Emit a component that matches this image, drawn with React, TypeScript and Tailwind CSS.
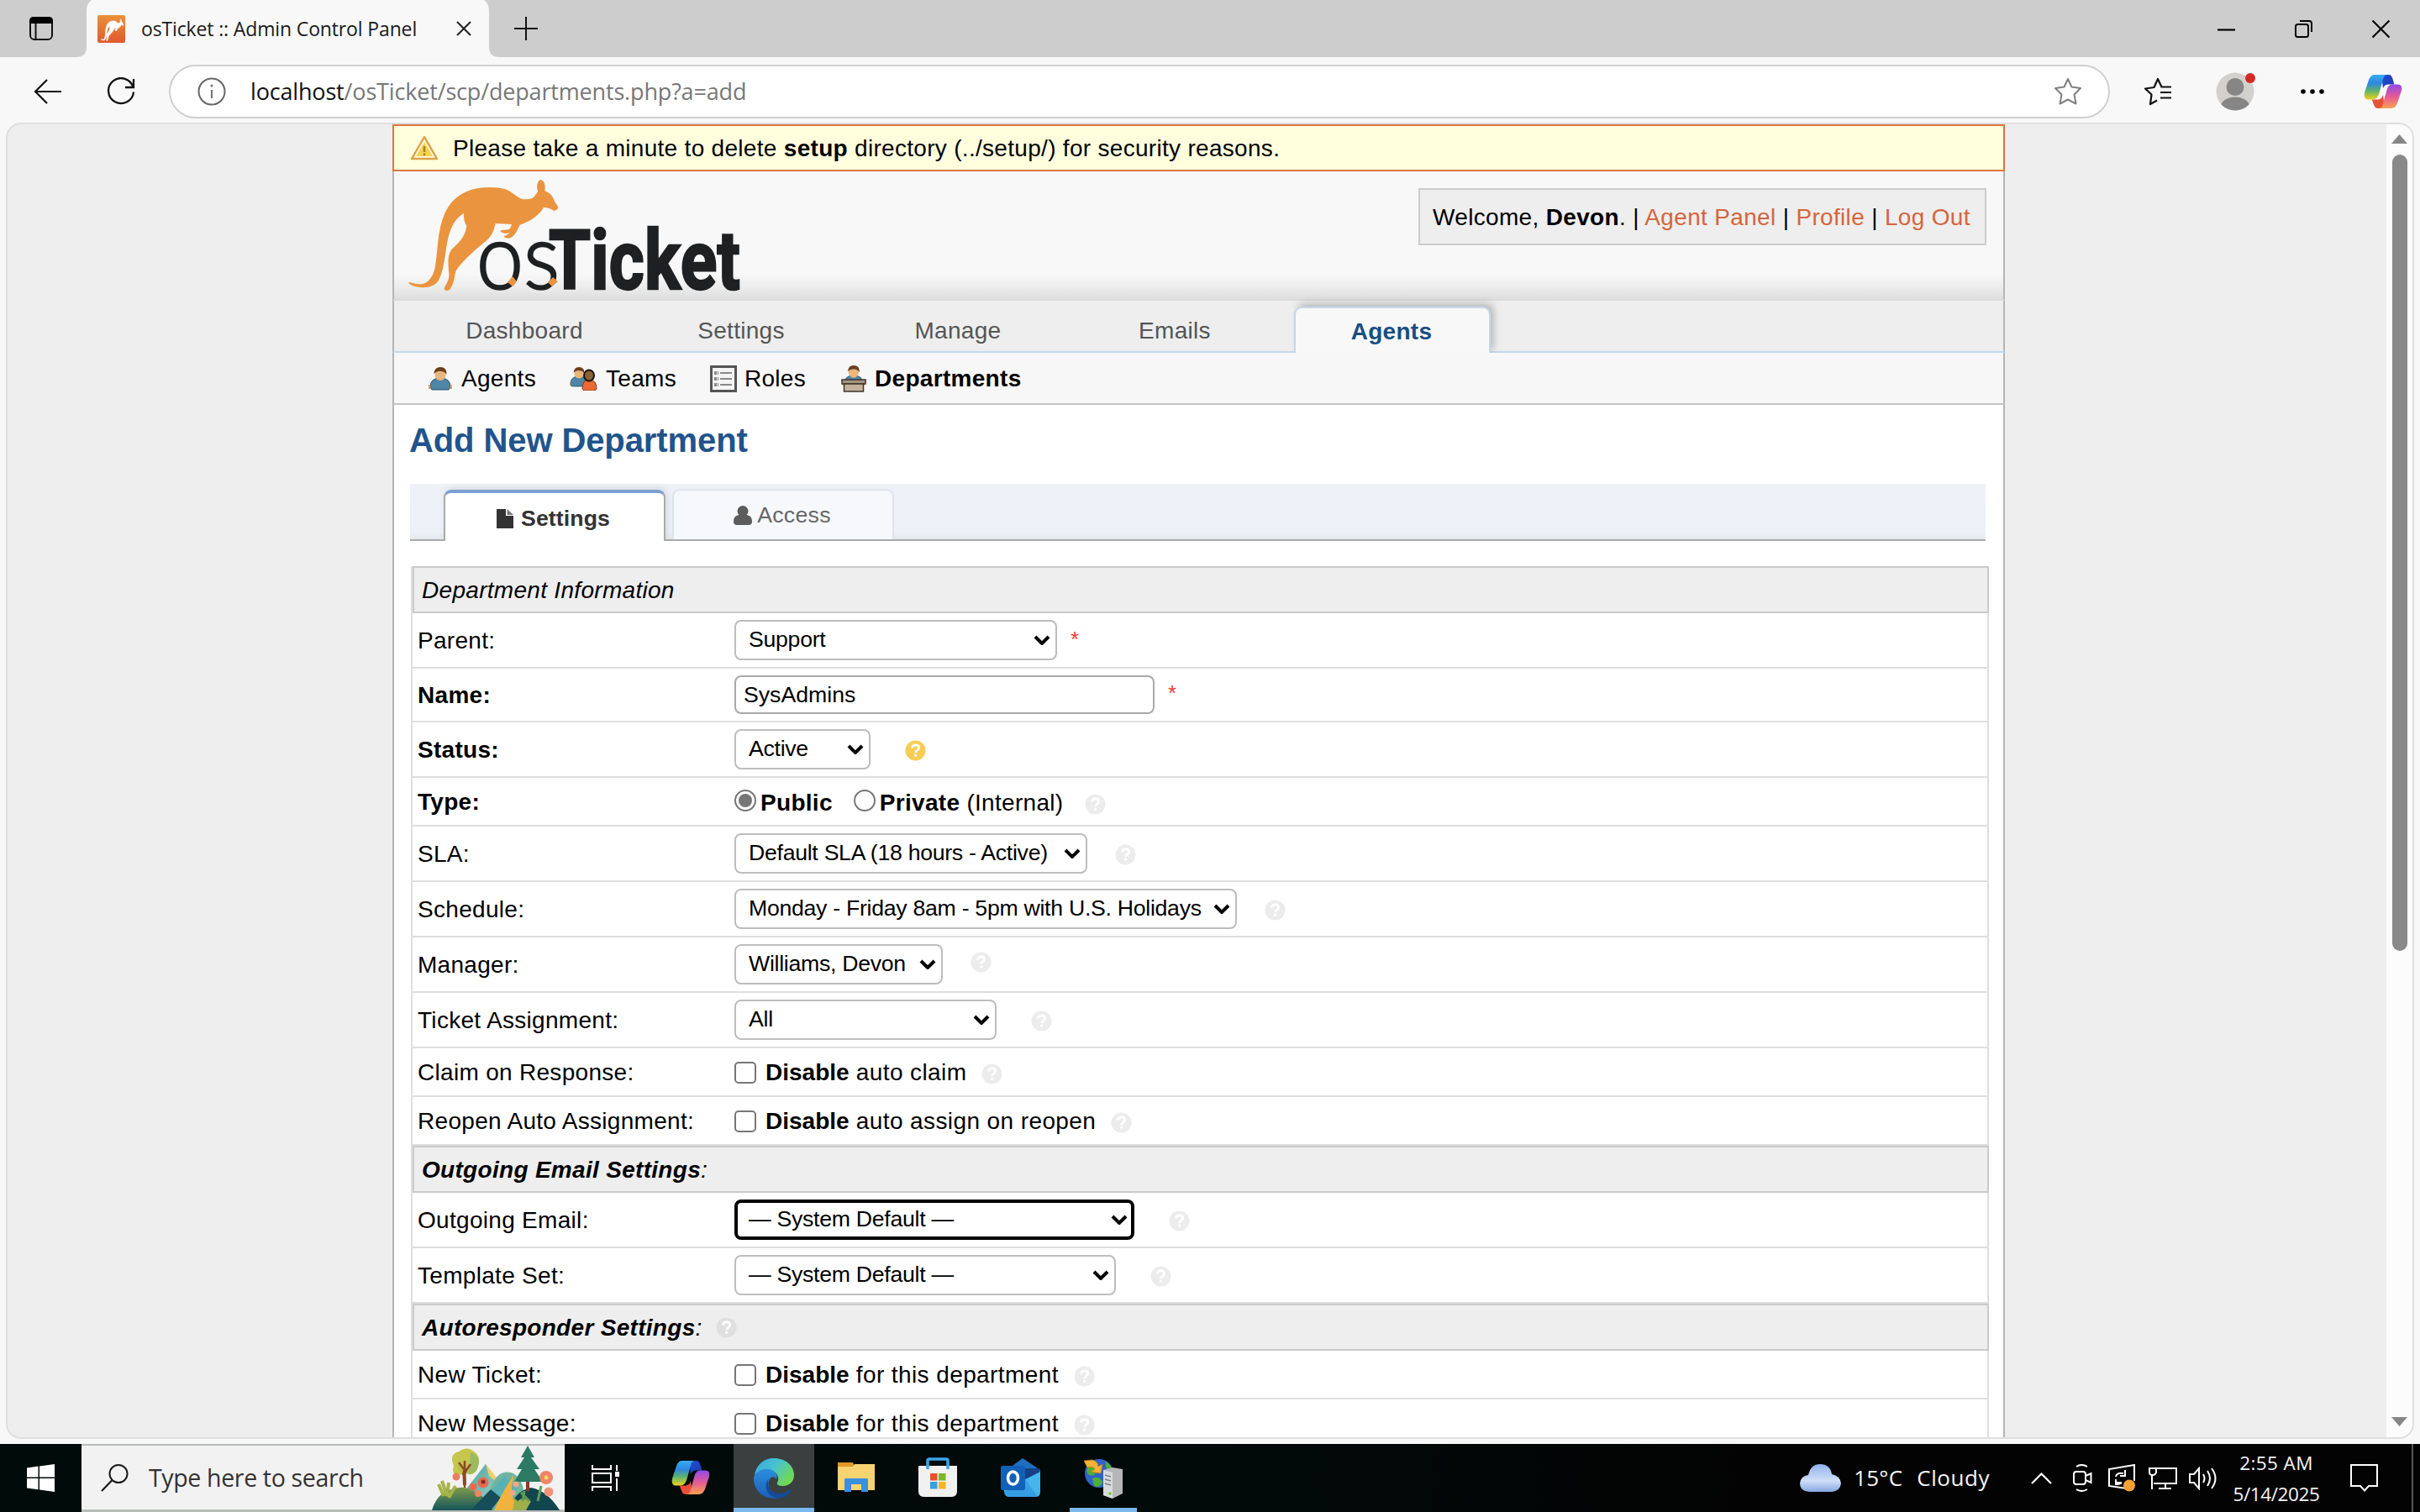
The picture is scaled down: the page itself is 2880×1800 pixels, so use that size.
import React from "react";

const ROO =
  "M421 318C424 326 418 333 412 334C404 328 396 321 386 322C380 338 364 366 328 384C322 400 318 418 306 430C298 434 288 430 289 425C294 421 300 418 303 411C297 416 284 416 279 407C282 400 294 404 302 399C306 392 307 386 308 382L268 379C264 400 262 425 236 452C214 478 184 520 172 545C167 560 168 590 157 612C154 620 146 621 142 614C142 602 154 590 154 560C151 520 150 492 160 472C174 452 194 430 197 388C191 375 190 360 190 343C168 362 156 395 149 450C143 500 141 550 127 585C116 607 95 609 83 607C70 606 56 598 54 590C62 588 70 597 85 596C102 594 113 572 119 540C127 480 124 400 146 335C160 295 186 262 225 253C250 248 275 250 291 256C310 266 322 288 334 292C342 294 350 292 357 290C364 284 368 274 372 264C368 250 369 232 378 222C388 226 391 238 389 263C404 272 410 285 412 298Z";

function T({ className = "", children }: { className?: string; children: React.ReactNode }) {
  return <span className={"whitespace-pre " + className}>{children}</span>;
}

function CopilotIcon({ id, className }: { id: string; className: string }) {
  return (
    <svg viewBox="0 0 48 44" className={className}>
      <defs>
        <linearGradient id={id + "a"} x1="0" y1="0" x2="0" y2="1">
          <stop offset="0" stopColor="#35aef0" />
          <stop offset=".35" stopColor="#2f86e0" />
          <stop offset=".65" stopColor="#5fb46b" />
          <stop offset="1" stopColor="#f1d21c" />
        </linearGradient>
        <linearGradient id={id + "b"} x1="0" y1="0" x2="0" y2="1">
          <stop offset="0" stopColor="#8f4be8" />
          <stop offset=".5" stopColor="#e45a98" />
          <stop offset="1" stopColor="#fba04c" />
        </linearGradient>
        <linearGradient id={id + "c"} x1="0" y1="0" x2="1" y2="1">
          <stop offset="0" stopColor="#1d50d8" />
          <stop offset="1" stopColor="#2637a8" />
        </linearGradient>
      </defs>
      <path d="M22 1H31C34 1 35 3 36 6L38 13H31C27 13 25 15 24 18Z" fill={`url(#${id}c)`} />
      <path d="M26 43H18C14 43 13 40 12 37L10 32H17C21 32 23 30 24 26Z" fill="#e8503a" />
      <path d="M14 1H29C26 1 25 3 24 7L19 25C17 30 15 32 11 32H6C1 32 0 28 1 23L6 8C8 3 10 1 14 1Z" fill={`url(#${id}a)`} />
      <path d="M34 43H19C22 43 23 41 24 37L29 19C31 14 33 13 37 13H42C47 13 48 16 47 21L42 36C40 41 38 43 34 43Z" fill={`url(#${id}b)`} />
    </svg>
  );
}

function TabStrip() {
  return (
    <div className="flex h-[68px] shrink-0 bg-[#cdcdcd]">
      <div className="flex w-[103px] items-center pl-[34px]">
        <svg viewBox="0 0 30 30" className="h-[30px] w-[30px]">
          <rect x="2" y="2" width="26" height="26" rx="5" fill="none" stroke="#111" strokeWidth="2" />
          <path d="M1 9V6Q1 1 6 1H24Q29 1 29 6V9Z" fill="#000" />
          <path d="M8.500 9V28" stroke="#111" strokeWidth="2" />
        </svg>
      </div>
      <div className="relative flex h-[68px] w-[479px] items-center bg-[#f8f8f8] pl-[13px]">
        <svg viewBox="0 0 12 12" className="absolute bottom-0 -left-[12px] h-[12px] w-[12px]">
          <path d="M12 0V12H0Q12 12 12 0" fill="#f8f8f8" />
        </svg>
        <svg viewBox="0 0 12 12" className="absolute bottom-0 -right-[12px] h-[12px] w-[12px]">
          <path d="M0 0V12H12Q0 12 0 0" fill="#f8f8f8" />
        </svg>
        <svg viewBox="0 0 8 12" className="absolute top-0 left-0 h-[12px] w-[8px]">
          <path d="M0 0H6Q0 4 0 12Z" fill="#cdcdcd" />
        </svg>
        <svg viewBox="0 0 8 12" className="absolute top-0 right-0 h-[12px] w-[8px]">
          <path d="M8 0H2Q8 4 8 12Z" fill="#cdcdcd" />
        </svg>
        <svg viewBox="0 0 33 33" className="h-[33px] w-[33px]">
          <defs>
            <linearGradient id="fav" x1="0" y1="0" x2="0" y2="1">
              <stop offset="0" stopColor="#e8923c" />
              <stop offset="1" stopColor="#e2592d" />
            </linearGradient>
          </defs>
          <rect width="33" height="33" rx="2" fill="url(#fav)" />
          <g transform="translate(0.500 -9) scale(.072 .064)">
            <path d={ROO} fill="#fff" stroke="#fff" strokeWidth="10" />
          </g>
        </svg>
        <T className="ml-[19px] font-['Open_Sans'] text-[23px] tracking-[-0.14px] text-[#1a1a1a]">osTicket :: Admin Control Panel</T>
        <svg viewBox="0 0 18 18" className="absolute left-[440px] h-[18px] w-[18px]">
          <path d="M1 1L17 17M17 1L1 17" stroke="#222" strokeWidth="2" />
        </svg>
      </div>
      <div className="flex flex-1 items-center">
        <svg viewBox="0 0 28 28" className="ml-[30px] h-[28px] w-[28px]">
          <path d="M14 0V28M0 14H28" stroke="#111" strokeWidth="2" />
        </svg>
        <div className="mr-[36px] ml-auto flex items-center gap-[71px]">
          <svg viewBox="0 0 21 21" className="h-[21px] w-[21px]">
            <path d="M0 11.500H21" stroke="#000" strokeWidth="2.200" />
          </svg>
          <svg viewBox="0 0 21 21" className="h-[21px] w-[21px]">
            <rect x="1" y="5" width="15" height="15" rx="2.500" fill="none" stroke="#000" strokeWidth="2" />
            <path d="M6 1H17Q20 1 20 4V14" fill="none" stroke="#000" strokeWidth="2" />
          </svg>
          <svg viewBox="0 0 21 21" className="h-[21px] w-[21px]">
            <path d="M.5 .5L20.500 20.500M20.500 .5L.5 20.500" stroke="#000" strokeWidth="2.200" />
          </svg>
        </div>
      </div>
    </div>
  );
}

function Toolbar() {
  return (
    <div className="flex h-[78px] shrink-0 items-center bg-[#f8f8f8] pt-[3px]">
      <svg viewBox="0 0 34 30" className="ml-[40px] h-[30px] w-[34px]">
        <path d="M33 15H2M16 1L2 15L16 29" fill="none" stroke="#111" strokeWidth="2.200" />
      </svg>
      <svg viewBox="0 0 34 34" className="ml-[53px] h-[34px] w-[34px]">
        <path d="M31.500 12A15 15 0 1 0 32 17.500" fill="none" stroke="#111" strokeWidth="2.300" />
        <path d="M32 2V12H22" fill="none" stroke="#111" strokeWidth="2.300" />
      </svg>
      <div className="ml-[40px] flex h-[64px] w-[2310px] items-center rounded-full border-2 border-[#cfcfcf] bg-white">
        <svg viewBox="0 0 34 34" className="ml-[32px] h-[34px] w-[34px]">
          <circle cx="17" cy="17" r="15.500" fill="none" stroke="#666" strokeWidth="2" />
          <path d="M17 15V25" stroke="#777" strokeWidth="2.200" />
          <circle cx="17" cy="10" r="1.600" fill="#777" />
        </svg>
        <span className="ml-[29px] pt-px font-['Open_Sans'] text-[27px] tracking-[-0.17px] text-[#777]">
          <T className="text-[#111]">localhost</T>
          <T>/osTicket/scp/departments.php?a=add</T>
        </span>
        <svg viewBox="0 0 34 34" className="mr-[31px] ml-auto h-[34px] w-[34px]">
          <path d="M17 2L21.500 11.500L32 13L24.500 20.500L26.500 31.500L17 26.500L7.500 31.500L9.500 20.500L2 13L12.500 11.500Z" fill="none" stroke="#808080" strokeWidth="2" strokeLinejoin="round" />
        </svg>
      </div>
      <svg viewBox="0 0 34 34" className="ml-[40px] h-[34px] w-[34px]">
        <path d="M16 27.500L8 32L9.500 20.500L2 13.500L12.500 12L17 2L21.500 11.500H33M20 18H33M20 24.500H33" fill="none" stroke="#111" strokeWidth="2.200" strokeLinejoin="round" />
      </svg>
      <div className="relative ml-[52px] h-[46px] w-[46px]">
        <svg viewBox="0 0 46 46" className="h-[46px] w-[46px]">
          <defs>
            <clipPath id="av">
              <circle cx="23" cy="23" r="22.500" />
            </clipPath>
          </defs>
          <g clipPath="url(#av)">
            <rect width="46" height="46" fill="#d3d1cd" />
            <circle cx="23" cy="17.500" r="10.500" fill="#868686" />
            <ellipse cx="23" cy="41" rx="17" ry="11.500" fill="#868686" />
          </g>
        </svg>
        <span className="absolute top-[1px] right-[-1px] h-[12px] w-[12px] rounded-full bg-[#d12a22]" />
      </div>
      <svg viewBox="0 0 28 6" className="ml-[55px] h-[6px] w-[28px]">
        <circle cx="3" cy="3" r="2.800" />
        <circle cx="14" cy="3" r="2.800" />
        <circle cx="25" cy="3" r="2.800" />
      </svg>
      <CopilotIcon id="cpa" className="ml-[47px] h-[42px] w-[46px]" />
    </div>
  );
}

function Help({ className = "", color = "text-[#ececec]" }: { className?: string; color?: string }) {
  return (
    <svg viewBox="0 0 25 25" className={`h-[25px] w-[25px] shrink-0 ${color} ${className}`}>
      <circle cx="12.500" cy="12.500" r="12" fill="currentColor" />
      <path d="M8.500 9.500C8.700 7 10.400 5.800 12.600 5.800C15 5.800 16.700 7.200 16.700 9.300C16.700 12.200 12.700 12.200 12.700 15" fill="none" stroke="#fff" strokeWidth="2.800" />
      <rect x="11.200" y="16.700" width="3" height="3" fill="#fff" />
    </svg>
  );
}

function Select({ w, focus, children }: { w: string; focus?: boolean; children: React.ReactNode }) {
  return (
    <div className={`flex h-[48px] shrink-0 items-center rounded-[8px] bg-white text-[26.67px] tracking-[-0.28px] ${w} ${focus ? "border-4 border-black pr-[4px] pl-[13px]" : "border-2 border-[#bdbdbd] pr-[6px] pl-[15px]"}`}>
      <T className="relative -top-px">{children}</T>
      <svg viewBox="0 0 20 12" className="ml-auto h-[12px] w-[20px] shrink-0">
        <path d="M2 2L10 10L18 2" fill="none" stroke="#000" strokeWidth="4" />
      </svg>
    </div>
  );
}

function Row({ label, bold, h = "h-[66px]", children }: { label: string; bold?: boolean; h?: string; children: React.ReactNode }) {
  return (
    <div className={`flex shrink-0 items-center border-x-2 border-b-2 border-[#dedede] ${h}`}>
      <div className={`w-[383px] shrink-0 pt-[2px] pl-[6px] ${bold ? "font-bold" : ""}`}>
        <T>{label}</T>
      </div>
      {children}
    </div>
  );
}

function SectionHead({ children }: { children: React.ReactNode }) {
  return (
    <div className="h-[56px] shrink-0 border-l-2 border-[#dedede]">
      <div className="flex h-[56px] items-center border-2 border-[#cacaca] bg-[#eee] pt-px pl-[9px] italic">{children}</div>
    </div>
  );
}

function Check({ text, label }: { text: string; label: string }) {
  return (
    <Row label={label} h="h-[58px]">
      <span className="mt-px h-[26px] w-[26px] rounded-[5px] border-2 border-[#767676] bg-white" />
      <span className="ml-[11px] pt-[2px]">
        <T className="font-bold tracking-normal">Disable</T>
        <T className="tracking-[0.4px]">{" " + text}</T>
      </span>
      <Help className="mt-[4px] ml-[18px]" />
    </Row>
  );
}

function Logo() {
  return (
    <svg viewBox="0 0 400 140" className="mt-[9px] ml-[17px] h-[140px] w-[400px] overflow-visible">
      <text x="83" y="130.500" fontFamily="Lato" fontWeight="300" fontSize="108" fill="#1e2022" stroke="#1e2022" strokeWidth="2.500" textLength="99" lengthAdjust="spacingAndGlyphs">os</text>
      <path d="M126 116L131 122L126 128L120 123ZM174 117L180 122L173 128L168 123Z" fill="#e9943f" />
      <text x="169" y="130.500" fontFamily="Roboto" fontWeight="700" fontSize="98" fill="#1e2022" stroke="#1e2022" strokeWidth="2.500" textLength="228" lengthAdjust="spacingAndGlyphs">Ticket</text>
      <g transform="translate(-24.200 -73.300) scale(.4847 .3333)">
        <path d={ROO} fill="#ea943f" />
      </g>
    </svg>
  );
}

function Person({ x = 0, shirt = "#4f86a5", hair = "#6b3e1c" }: { x?: number; shirt?: string; hair?: string }) {
  return (
    <g transform={`translate(${x} 0)`}>
      <path d="M2 24Q2 13 14 13Q26 13 26 24L24 27H4Z" fill={shirt} stroke="#2a516b" strokeWidth="1" />
      <path d="M1 21V26M27 21V26" stroke="#e0a066" strokeWidth="2.500" />
      <ellipse cx="14" cy="9" rx="6.500" ry="7" fill="#e9b67c" />
      <path d="M6.500 8Q7 0 14 0Q22 0 21.500 9Q19 5 15 5Q10 4 6.500 8Z" fill={hair} />
    </g>
  );
}

function Header() {
  return (
    <>
      <div className="flex h-[56px] shrink-0 items-center border-2 border-[#df7440] bg-[#ffffdd] pl-[19px]">
        <svg viewBox="0 0 34 30" className="h-[30px] w-[34px]">
          <path d="M17 2L32 28H2Z" fill="#fffbe6" stroke="#dca245" strokeWidth="2.500" strokeLinejoin="round" />
          <path d="M17 8L27 25H7Z" fill="#f3d44e" />
          <path d="M17 13V20M17 21.500V24" stroke="#a9822a" strokeWidth="2.500" />
        </svg>
        <span className="ml-[17px] pt-[2px]">
          <T>Please take a minute to delete </T>
          <T className="font-bold">setup</T>
          <T> directory (../setup/) for security reasons.</T>
        </span>
      </div>
      <div className="flex h-[154px] shrink-0 justify-between border-x-2 border-b-2 border-x-[#b5b5b5] border-b-[#dcdcdc] bg-[linear-gradient(to_bottom,#f8f8f8_0,#f8f8f8_80%,#ededed_90%,#dedede_100%)]">
        <div className="-ml-[2px]">
          <Logo />
        </div>
        <div className="mt-[20px] mr-[20px] flex h-[68px] w-[676px] items-center border-2 border-[#ccc] bg-[#eee] pt-[2px] pl-[15px]">
          <span className="whitespace-pre tracking-[0.33px] text-[#d5653d]">
            <T className="text-black">Welcome, </T>
            <T className="font-bold text-black">Devon</T>
            <T className="text-black">. | </T>
            <T>Agent Panel</T>
            <T className="text-black"> | </T>
            <T>Profile</T>
            <T className="text-black"> | </T>
            <T>Log Out</T>
          </span>
        </div>
      </div>
      <div className="flex h-[62px] shrink-0 items-end border-x-2 border-b-2 border-x-[#b5b5b5] border-b-[#c6d8ea] bg-[#eee] text-[#555]">
        {["Dashboard", "Settings", "Manage", "Emails"].map((t) => (
          <div key={t} className="flex h-[48px] w-[258px] items-center justify-center first:ml-[26px]">
            <T>{t}</T>
          </div>
        ))}
        <div className="-mb-[2px] ml-[13px] flex h-[55px] w-[234px] items-center justify-center rounded-t-[9px] border-2 border-b-0 border-[#c6d8ea] bg-[#f8f8f8] pt-[2px] pr-[2px] font-bold text-[#184e81] shadow-[4px_-4px_8px_rgba(0,0,0,0.22)] [clip-path:inset(-14px_-14px_0_-14px)]">
          <T>Agents</T>
        </div>
      </div>
      <div className="flex h-[62px] shrink-0 items-center border-x-2 border-b-2 border-x-[#b5b5b5] border-b-[#c3c3c3] bg-[#f7f7f7] pt-px pl-[41px]">
        <svg viewBox="0 0 28 28" className="h-[28px] w-[28px]">
          <Person />
        </svg>
        <T className="ml-[11px]">Agents</T>
        <svg viewBox="0 0 34 28" className="ml-[40px] h-[28px] w-[34px]">
          <g transform="scale(.85)">
            <Person x={-1} />
          </g>
          <path d="M15 26Q15 15 23 15Q32 15 32 26L30 28H17Z" fill="#ea6a35" stroke="#8c3514" strokeWidth="1" />
          <ellipse cx="23" cy="10" rx="6" ry="6.500" fill="#8a6138" stroke="#1a120a" strokeWidth="2" />
        </svg>
        <T className="ml-[9px]">Teams</T>
        <svg viewBox="0 0 32 32" className="ml-[40px] h-[32px] w-[32px]">
          <rect x="1.500" y="1.500" width="29" height="29" fill="#f4f4f4" stroke="#555" strokeWidth="3" />
          <path d="M12 9H26M12 16H26M12 23H26" stroke="#888" strokeWidth="2" />
          <path d="M5 9H10M5 16H10M5 23H10" stroke="#888" strokeWidth="4" strokeDasharray="3 1" />
        </svg>
        <T className="ml-[9px]">Roles</T>
        <svg viewBox="0 0 30 32" className="ml-[42px] h-[32px] w-[30px]">
          <g transform="translate(2 0) scale(.92)">
            <Person />
          </g>
          <path d="M1 17H29V22H1Z" fill="#a3937d" stroke="#3d362c" strokeWidth="1.500" />
          <path d="M3.500 22H26.500V31H3.500Z" fill="#c4b299" stroke="#3d362c" strokeWidth="1.500" />
        </svg>
        <T className="ml-[10px] font-bold">Departments</T>
      </div>
    </>
  );
}

function FormTabs() {
  return (
    <div className="mr-[21px] ml-[19px] flex h-[68px] shrink-0 items-end border-b-2 border-[#aaa] bg-[linear-gradient(to_bottom,#eef2f8_0,#edf1f7_88%,#e4e7ec_100%)] text-[26.67px]">
      <div className="-mb-[2px] ml-[40px] flex h-[61px] w-[264px] items-center justify-center rounded-t-[9px] border-2 border-t-4 border-b-0 border-[#aaa] border-t-[#7a9fd3] bg-white pt-[3px] pr-[3px] font-bold text-[#333] shadow-[2px_-2px_8px_rgba(0,0,0,0.1)] [clip-path:inset(-10px_-10px_0_-10px)]">
        <svg viewBox="0 0 20 23" className="h-[23px] w-[20px]">
          <path d="M0 0H11V8H20V23H0Z" fill="#333" />
          <path d="M12.500 0L20 7H12.500Z" fill="#777" />
        </svg>
        <T className="ml-[9px] tracking-[0.1px]">Settings</T>
      </div>
      <div className="ml-[8px] flex h-[60px] w-[264px] items-center justify-center rounded-t-[9px] border-2 border-b-0 border-[#dfe4ea] bg-[#f6f8fc] pr-[2px] text-[#666]">
        <svg viewBox="0 0 22 23" className="h-[23px] w-[22px]">
          <path d="M0 19Q0 12 6 11H16Q22 12 22 19Q22 23 18 23H4Q0 23 0 19Z" fill="#5c5c5c" />
          <circle cx="11" cy="6.500" r="6.500" fill="#5c5c5c" />
        </svg>
        <T className="ml-[6px]">Access</T>
      </div>
    </div>
  );
}

function Form() {
  return (
    <div className="mt-[30px] mr-[17px] ml-[20px] flex flex-col">
      <SectionHead>
        <T>Department Information</T>
      </SectionHead>
      <Row label="Parent:">
        <Select w="w-[384px]">Support</Select>
        <T className="-mt-[3px] ml-[16px] text-[26px] text-[#f03c3c]">*</T>
      </Row>
      <Row label="Name:" bold h="h-[64px]">
        <div className="flex h-[46px] w-[500px] items-center rounded-[8px] border-2 border-[#a9a9a9] bg-white pl-[9px] text-[26.67px] tracking-normal">
          <T>SysAdmins</T>
        </div>
        <T className="-mt-[5px] ml-[16px] text-[26px] text-[#f03c3c]">*</T>
      </Row>
      <Row label="Status:" bold>
        <Select w="w-[162px]">Active</Select>
        <Help className="mt-[3px] ml-[41px]" color="text-[#f8cc55]" />
      </Row>
      <Row label="Type:" bold h="h-[58px]">
        <span className="-mt-[2px] flex h-[26px] w-[26px] items-center justify-center rounded-full border-2 border-[#767676] bg-white">
          <span className="h-[16px] w-[16px] rounded-full bg-[#767676]" />
        </span>
        <T className="ml-[5px] pt-[3px] font-bold">Public</T>
        <span className="-mt-[2px] ml-[25px] h-[26px] w-[26px] rounded-full border-2 border-[#767676] bg-white" />
        <span className="ml-[5px] pt-[3px]">
          <T className="font-bold">Private</T>
          <T> (Internal)</T>
        </span>
        <Help className="mt-[6px] ml-[26px]" />
      </Row>
      <Row label="SLA:">
        <Select w="w-[420px]">Default SLA (18 hours - Active)</Select>
        <Help className="mt-[3px] ml-[33px]" />
      </Row>
      <Row label="Schedule:">
        <Select w="w-[598px]">Monday - Friday 8am - 5pm with U.S. Holidays</Select>
        <Help className="mt-[3px] ml-[33px]" />
      </Row>
      <Row label="Manager:">
        <Select w="w-[248px]">Williams, Devon</Select>
        <Help className="mb-[5px] ml-[33px]" />
      </Row>
      <Row label="Ticket Assignment:">
        <Select w="w-[312px]">All</Select>
        <Help className="mt-[3px] ml-[41px]" />
      </Row>
      <Check label="Claim on Response:" text="auto claim" />
      <Check label="Reopen Auto Assignment:" text="auto assign on reopen" />
      <SectionHead>
        <span>
          <T className="font-bold">Outgoing Email Settings</T>:
        </span>
      </SectionHead>
      <Row label="Outgoing Email:">
        <Select w="w-[476px]" focus>
          — System Default —
        </Select>
        <Help className="mt-[3px] ml-[41px]" />
      </Row>
      <Row label="Template Set:">
        <Select w="w-[454px]">— System Default —</Select>
        <Help className="mt-[3px] ml-[41px]" />
      </Row>
      <SectionHead>
        <span>
          <T className="font-bold">Autoresponder Settings</T>:
        </span>
        <Help className="ml-[16px]" color="text-[#dfdfdf]" />
      </SectionHead>
      <Check label="New Ticket:" text="for this department" />
      <Check label="New Message:" text="for this department" />
    </div>
  );
}

function Pane() {
  return (
    <div className="flex h-[1573px] shrink-0 items-start bg-[#f8f8f8] px-[7px]">
      <div className="flex h-[1567px] w-full overflow-hidden rounded-[18px] border-2 border-[#dfdfdf] bg-[#eee]">
        <div className="ml-[458px] flex h-[1563px] w-[1919px] shrink-0 flex-col overflow-hidden bg-white font-['Liberation_Sans'] text-[28px] leading-[34px] tracking-[0.3px] text-black">
          <Header />
          <div className="flex flex-1 flex-col border-x-2 border-[#b5b5b5]">
            <div className="flex h-[94px] shrink-0 items-center pb-[10px] pl-[18px] text-[40px] font-bold tracking-[-0.1px] text-[#21548c]">
              <T>Add New Department</T>
            </div>
            <FormTabs />
            <Form />
          </div>
        </div>
        <div className="ml-auto flex w-[31px] shrink-0 flex-col items-center bg-[#fcfcfc]">
          <svg viewBox="0 0 19 11" className="mt-[12px] h-[11px] w-[19px]">
            <path d="M9.500 0L19 11H0Z" fill="#868686" />
          </svg>
          <div className="mt-[13px] h-[948px] w-[18px] rounded-full bg-[#898989]" />
          <svg viewBox="0 0 19 11" className="mt-auto mb-[13px] h-[11px] w-[19px]">
            <path d="M9.500 11L19 0H0Z" fill="#868686" />
          </svg>
        </div>
      </div>
    </div>
  );
}

function SearchArt() {
  return (
    <svg viewBox="0 0 152 77" className="h-[77px] w-[152px]">
      <defs>
        <linearGradient id="hillA" x1="0" y1="0" x2="0" y2="1">
          <stop offset="0" stopColor="#7d9a4b" />
          <stop offset="1" stopColor="#14565c" />
        </linearGradient>
        <linearGradient id="mtn" x1="0" y1="0" x2="1" y2="1">
          <stop offset="0" stopColor="#4aa29d" />
          <stop offset="1" stopColor="#a6d9cf" />
        </linearGradient>
      </defs>
      <path d="M42 50L64 22L84 48V70H42Z" fill="url(#mtn)" />
      <path d="M64 22L74 34L80 46L68 36Z" fill="#f2cf6c" />
      <path d="M70 50Q78 28 94 32Q108 36 110 60L96 74H66Z" fill="#6fb5a0" />
      <path d="M60 66L86 36L102 50L74 77H54Z" fill="#58b2b5" />
      <path d="M0 77Q6 56 24 52Q44 44 66 66L72 77Z" fill="url(#hillA)" />
      <path d="M46 77L70 52L82 62L70 77Z" fill="#154e5a" />
      <path d="M92 77Q98 54 118 50Q138 54 152 77Z" fill="#12464f" />
      <path d="M84 66Q96 58 102 66Q108 60 118 66L112 77H80Z" fill="#9db04a" />
      <path d="M74 77Q82 58 98 34Q92 56 98 66L96 77Z" fill="#f1b23e" />
      <path d="M39 47L38 22M38 34L31 24M39 32L48 22" stroke="#8a4a26" strokeWidth="4" fill="none" />
      <path d="M26 24Q20 10 32 7Q42 0 50 7Q60 14 54 26Q52 36 42 34L39 22L36 34Q22 38 26 24Z" fill="#c2c445" opacity=".95" />
      <path d="M46 8Q60 12 54 28Q50 34 44 34Z" fill="#9cba62" />
      <path d="M39 50V18M39 32L46 22M38 28L32 20" stroke="#8a4a26" strokeWidth="2.500" fill="none" />
      <path d="M114 0L122 14H118L128 28H122L132 43H98L107 28H101L110 14H106Z" fill="#2d7a63" />
      <path d="M114 43V54" stroke="#8a3b22" strokeWidth="4" />
      <circle cx="61" cy="44" r="6.500" fill="#e86a4e" />
      <circle cx="61" cy="43" r="2.500" fill="#7c2e24" />
      <circle cx="29" cy="37" r="4.500" fill="#ea7f62" />
      <circle cx="49" cy="49" r="4.500" fill="#ea6a4e" />
      <circle cx="55" cy="57" r="4" fill="#f2845f" />
      <path d="M8 46L14 60M12 42L18 60M20 44L18 60M28 48L20 62" stroke="#a4b44a" strokeWidth="4" />
      <circle cx="136" cy="38" r="8" fill="#ee8566" />
      <circle cx="136" cy="38" r="2.500" fill="#f6d36b" />
      <circle cx="139" cy="55" r="5.500" fill="#f09377" />
      <path d="M130 48L126 66M110 54L108 66M106 56L116 66" stroke="#5f9b50" strokeWidth="3" />
      <circle cx="100" cy="46" r="3.500" fill="#f3a58e" />
      <circle cx="96" cy="56" r="3.500" fill="#f3a58e" />
    </svg>
  );
}

function Taskbar() {
  const slot = "flex h-[80px] w-[96px] items-center justify-center";
  return (
    <div className="flex h-[81px] shrink-0 bg-[linear-gradient(to_right,#010b09_0,#010a09_50%,#030303_72%)] font-['Open_Sans']">
      <div className="flex w-[97px] items-center pl-[32px]">
        <svg viewBox="0 0 33 33" className="h-[33px] w-[33px]">
          <path d="M0 4.500L13.500 2.600V15.500H0ZM15 2.400L33 0V15.500H15ZM0 17H13.500V30.300L0 28.400ZM15 17H33V33L15 30.500Z" fill="#fff" />
        </svg>
      </div>
      <div className="flex h-[81px] w-[575px] items-center border-t-2 border-b-[3px] border-[#b8bcb8] bg-[#f2f2f2] pl-[23px]">
        <svg viewBox="0 0 33 33" className="h-[33px] w-[33px]">
          <circle cx="21" cy="11.500" r="10.500" fill="none" stroke="#1a1a1a" strokeWidth="2" />
          <path d="M13.500 19L1 32" stroke="#1a1a1a" strokeWidth="2.200" />
        </svg>
        <T className="ml-[24px] pt-px text-[28.500px] tracking-[-0.35px] text-[#333]">Type here to search</T>
        <div className="mr-[6px] ml-auto">
          <SearchArt />
        </div>
      </div>
      <div className="ml-[5px] flex gap-[2px]">
        <div className="flex h-[80px] w-[96px] items-center justify-center pr-[10px]">
          <svg viewBox="0 0 33 31" className="h-[31px] w-[33px]">
            <path d="M1 0V5H23V0M1 31V26H23V31M1 10H23V21H1ZM30 0V7M30 16V31" fill="none" stroke="#fff" strokeWidth="2" />
            <rect x="28" y="8" width="5" height="6" fill="#fff" />
          </svg>
        </div>
        <div className="flex h-[80px] w-[96px] items-center justify-center pr-[2px]">
          <CopilotIcon id="cpb" className="h-[42px] w-[46px]" />
        </div>
        <div className="relative flex h-[81px] w-[96px] items-center justify-center bg-[#3a403f]">
          <svg viewBox="0 0 48 48" className="h-[48px] w-[48px]">
            <defs>
              <linearGradient id="edgeA" x1="0" y1="0" x2="1" y2=".6">
                <stop offset="0" stopColor="#3aa5e0" />
                <stop offset=".5" stopColor="#46c3d0" />
                <stop offset="1" stopColor="#74d94f" />
              </linearGradient>
              <linearGradient id="edgeB" x1="0" y1="0" x2="0" y2="1">
                <stop offset="0" stopColor="#2b8edb" />
                <stop offset="1" stopColor="#1b5fb8" />
              </linearGradient>
            </defs>
            <path d="M1 22C2 8 12 0 24 0C38 0 48 9 48 20C48 28 42 33 35 33C29 33 27 31 28 29C31 25 29 16 20 15C11 14 3 18 1 22Z" fill="url(#edgeA)" />
            <path d="M0 24C1 16 10 12 18 13C26 14 29 21 27 25C22 18 16 26 18 34C20 42 26 47 32 46.500C28 48 24 48 20 47.500C8 46 0 36 0 24Z" fill="url(#edgeB)" />
            <path d="M18 24C14 32 20 42 30 42C37 42 41 39 43 37.500C44 37 45 38 44 39C40 45 34 48 28 47.500C17 46 10 34 18 24Z" fill="#134a9a" />
          </svg>
          <span className="absolute bottom-0 left-0 h-[5px] w-[96px] bg-[#7ab8f0]" />
        </div>
        <div className={slot}>
          <svg viewBox="0 0 44 38" className="h-[38px] w-[44px]">
            <path d="M0 1H18L20 6H0Z" fill="#e09a25" />
            <path d="M0 6H18L20 3H44V34H0Z" fill="#f8d470" />
            <path d="M8 21Q8 20 10 20H34Q36 20 36 21V36H28V27H16V36H8Z" fill="#3a8fdf" />
          </svg>
        </div>
        <div className="flex h-[80px] w-[96px] items-center justify-center pr-[3px]">
          <svg viewBox="0 0 48 48" className="h-[48px] w-[48px]">
            <path d="M12 12V4Q12 2 14 2H34Q36 2 36 4V12" fill="none" stroke="#38a6ea" strokeWidth="3.500" />
            <path d="M1 10H47V40Q47 47 40 47H8Q1 47 1 40Z" fill="#f1f1f1" />
            <path d="M12 10V14M36 10V14" stroke="#38a6ea" strokeWidth="3.500" />
            <rect x="15" y="19" width="8.500" height="8.500" fill="#e4512b" />
            <rect x="25" y="19" width="8.500" height="8.500" fill="#7db52b" />
            <rect x="15" y="29" width="8.500" height="8.500" fill="#35a0e4" />
            <rect x="25" y="29" width="8.500" height="8.500" fill="#f8b52a" />
          </svg>
        </div>
        <div className={slot}>
          <svg viewBox="0 0 48 46" className="h-[46px] w-[48px]">
            <path d="M7 14L26 0L47 14V30H7Z" fill="#1f6fc0" />
            <path d="M28 12H46V22L30 32Z" fill="#153f86" />
            <path d="M4 38L47 16V40Q47 46 41 46H10Q5 46 4 40Z" fill="#45b5ee" />
            <path d="M4 40L30 26L44 46H10Q5 46 4 40Z" fill="#2b8fdc" opacity=".6" />
            <rect x="0" y="9" width="29" height="29" rx="2" fill="#1261b8" />
            <ellipse cx="14.500" cy="23.500" rx="6" ry="7.500" fill="none" stroke="#fff" strokeWidth="3.500" />
          </svg>
        </div>
        <div className="relative flex h-[81px] w-[96px] items-center justify-center">
          <svg viewBox="0 0 46 48" className="h-[48px] w-[46px]">
            <circle cx="18" cy="18" r="17" fill="#2f63c8" />
            <path d="M4 12Q8 6 14 8Q18 14 12 20Q6 22 3 16ZM10 24Q18 20 22 28Q20 36 12 33ZM26 4Q33 8 33 14Q28 16 26 10Z" fill="#4fae3a" />
            <path d="M0 3L10 2Q17 4 17 10L22 7L20 18L8 16L13 13Q11 9 4 11Z" fill="#f6b235" stroke="#c17d14" strokeWidth=".8" />
            <path d="M23 14L34 11L46 13V42L34 48L23 44Z" fill="#b4b6b8" />
            <path d="M23 14L34 17V48L23 44Z" fill="#d9dadb" />
            <path d="M25 20L32 22M25 25L32 27M25 30L32 32" stroke="#808284" strokeWidth="1.500" />
            <circle cx="31" cy="42" r="1.800" fill="#6fd02c" />
          </svg>
          <span className="absolute bottom-0 left-[8px] h-[5px] w-[80px] bg-[#7ab8f0]" />
        </div>
      </div>
      <div className="ml-auto flex h-[81px] items-center text-[#f5f5f5]">
        <svg viewBox="0 0 49 33" className="h-[33px] w-[49px]">
          <defs>
            <linearGradient id="cld" x1="0" y1="0" x2="0" y2="1">
              <stop offset="0" stopColor="#8fb2ea" />
              <stop offset=".6" stopColor="#cfdff7" />
              <stop offset="1" stopColor="#86a8e2" />
            </linearGradient>
          </defs>
          <path d="M11 33Q0 32 0 23Q1 14 10 13Q13 0 24 0Q36 0 38 12Q48 14 49 23Q48 32 38 33Z" fill="url(#cld)" />
        </svg>
        <T className="ml-[15px] text-[26px] tracking-[0.2px]">15°C</T>
        <T className="ml-[17px] text-[26px] tracking-[0.55px]">Cloudy</T>
        <svg viewBox="0 0 25 14" className="ml-[49px] h-[14px] w-[25px]">
          <path d="M1 13L12.500 1.500L24 13" fill="none" stroke="#fff" strokeWidth="2.200" />
        </svg>
        <svg viewBox="0 0 23 33" className="ml-[25px] h-[33px] w-[23px]">
          <rect x="1" y="9" width="14" height="15" rx="3" fill="none" stroke="#fff" strokeWidth="2" />
          <path d="M15 14L21.500 11V22L15 19M4 3Q10 -1 17 3M4 30Q10 34 17 30" fill="none" stroke="#fff" strokeWidth="2" />
        </svg>
        <svg viewBox="0 0 33 33" className="ml-[19px] h-[33px] w-[33px]">
          <path d="M22 29L1 26V6L31 1V20" fill="none" stroke="#fff" strokeWidth="2" />
          <path d="M9 15Q10 10 18 11M20 7V14H14M9 22H16M9 18V24Q14 24 16 22" fill="none" stroke="#fff" strokeWidth="2" />
          <circle cx="25" cy="25.500" r="7" fill="#f7a035" />
        </svg>
        <svg viewBox="0 0 34 28" className="ml-[15px] h-[28px] w-[34px]">
          <path d="M9 2H33V20H6M20 20V26M12 26H27M4 10V27" fill="none" stroke="#fff" strokeWidth="2" />
          <path d="M1 2H9V7Q8 10 5 10Q1 10 1 7Z" fill="#030303" stroke="#fff" strokeWidth="2" />
        </svg>
        <svg viewBox="0 0 34 28" className="ml-[14px] h-[28px] w-[34px]">
          <path d="M1 9H6L12 2V26L6 19H1ZM17 9Q20 14 17 19M22 5Q28 14 22 23M27 2Q36 14 27 26" fill="none" stroke="#fff" strokeWidth="2" />
        </svg>
        <div className="ml-[18px] flex w-[104px] flex-col items-center text-[22.500px] leading-[37px]">
          <T className="tracking-[0.4px]">2:55 AM</T>
          <T className="tracking-[-0.4px]">5/14/2025</T>
        </div>
        <svg viewBox="0 0 33 33" className="ml-[36px] h-[33px] w-[33px]">
          <path d="M1 1H32V26H22L17 31.500L12 26H1Z" fill="none" stroke="#fff" strokeWidth="2" />
        </svg>
        <span className="mr-[8px] ml-[40px] h-[81px] w-[2px] bg-[#555]" />
      </div>
    </div>
  );
}

export default function App() {
  return (
    <div className="flex h-[1800px] w-[2880px] flex-col overflow-hidden bg-[#f8f8f8]">
      <TabStrip />
      <Toolbar />
      <Pane />
      <Taskbar />
    </div>
  );
}
